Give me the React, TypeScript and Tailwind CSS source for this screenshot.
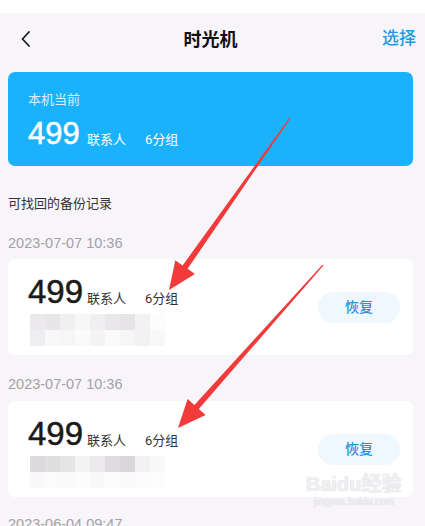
import React from "react";

const font = "font-['Roboto','Noto_Sans_CJK_SC',sans-serif]";
const num = "font-['Liberation_Sans',sans-serif]";

// mosaic cells standing in for the blurred text under each backup
const mosaicA = [
  ["bg-[#ebe9eb]", "bg-[#e8e6e8]", "bg-[#f1f0f1]", "bg-[#f8f7f8]", "bg-[#efeef0]", "bg-[#e9e7e9]", "bg-[#e6e4e6]", "bg-[#f3f2f3]", "bg-[#fcfcfc]"],
  ["bg-[#eeedef]", "bg-[#f8f8f8]", "bg-[#f7f6f7]", "bg-[#fafafa]", "bg-[#f5f4f5]", "bg-[#fafafa]", "bg-[#f6f6f6]", "bg-[#f1f1f1]", "bg-[#f8f8f8]"],
];
const mosaicB = [
  ["bg-[#dcdadc]", "bg-[#e0dfe0]", "bg-[#e6e5e6]", "bg-[#f4f3f4]", "bg-[#eceaec]", "bg-[#dddbdd]", "bg-[#d9d7d9]", "bg-[#f3f2f3]", "bg-[#f9f9f9]"],
  ["bg-[#f9f9f9]", "bg-[#fbfbfb]", "bg-[#fafafa]", "bg-[#fcfcfc]", "bg-[#f9f9f9]", "bg-[#fbfbfb]", "bg-[#fafafa]", "bg-[#fcfcfc]", "bg-[#fdfdfd]"],
];

const Mosaic: React.FC<{ cells: string[][] }> = ({ cells }) => (
  <div className="mt-[5px] ml-[2px] flex flex-col">
    {cells.map((row, r) => (
      <div key={r} className="flex">
        {row.map((c, i) => (
          <div key={i} className={`w-[15px] h-[16px] ${c}`} />
        ))}
      </div>
    ))}
  </div>
);

const BackupCard: React.FC<{ cells: string[][] }> = ({ cells }) => (
  <div className="ml-[8px] mr-[12px] h-[96px] bg-white rounded-[7px] flex items-center pl-[20px] pr-[13px]">
    <div className="flex-1 self-start pt-[16px]">
      <div className="flex items-baseline h-[34px]">
        <span className={`w-[59px] text-[33px] leading-none text-[#1a1a1a] [-webkit-text-stroke:0.5px_#1a1a1a] ${num}`}>499</span>
        <span className="w-[58px] text-[13px] text-[#333]">联系人</span>
        <span className="text-[13px] text-[#333]">6分组</span>
      </div>
      <Mosaic cells={cells} />
    </div>
    <button className="w-[82px] h-[31px] rounded-full bg-[#eef8fe] text-[14px] font-medium text-[#2b8fd6]">
      恢复
    </button>
  </div>
);

const DateLine: React.FC<{ text: string; className: string }> = ({ text, className }) => (
  <div className={`px-[8px] text-[14.5px] leading-[20px] text-[#a3a1a5] ${num} ${className}`}>{text}</div>
);

export default function App() {
  return (
    <div className={`relative w-[425px] h-[526px] overflow-hidden bg-[#f7f5f9] ${font}`}>
      <div className="h-[13px] bg-white" />

      {/* Header */}
      <div className="h-[52px] grid grid-cols-[1fr_auto_1fr] items-center px-[9px]">
        <svg width="14" height="18" viewBox="0 0 14 18" className="ml-[11px]">
          <path d="M9 2 L2.5 9 L9 16" fill="none" stroke="#1a1a1a" strokeWidth="1.8" strokeLinecap="round" strokeLinejoin="round" />
        </svg>
        <span className="text-[18px] font-semibold text-[#111] mr-[4px]">时光机</span>
        <span className="justify-self-end text-[17px] font-medium text-[#1a9be6]">选择</span>
      </div>

      {/* Current device */}
      <div className="mt-[7px] ml-[8px] mr-[12px] h-[94px] rounded-[7px] bg-[#1ab2fd] pl-[20px] pt-[19px]">
        <div className="text-[13px] leading-[18px] text-[#d6f0ff]">本机当前</div>
        <div className="mt-[9px] flex items-baseline text-white">
          <span className={`w-[59px] text-[31px] leading-none [-webkit-text-stroke:0.5px_#fff] ${num}`}>499</span>
          <span className="w-[58px] text-[13px]">联系人</span>
          <span className="text-[13px]">6分组</span>
        </div>
      </div>

      <div className="mt-[28px] px-[8px] text-[13px] leading-[20px] text-[#333]">可找回的备份记录</div>

      <DateLine className="mt-[19px]" text="2023-07-07 10:36" />
      <div className="mt-[6px]">
        <BackupCard cells={mosaicA} />
      </div>

      <DateLine className="mt-[19px]" text="2023-07-07 10:36" />
      <div className="mt-[7px]">
        <BackupCard cells={mosaicB} />
      </div>

      <DateLine className="mt-[17px]" text="2023-06-04 09:47" />

      {/* Watermark */}
      <div className="absolute left-[306px] top-[472px] flex flex-col items-center font-['Liberation_Sans','Noto_Sans_CJK_SC',sans-serif] text-[#f1eff3] [text-shadow:0_0_1px_#c9c7cb]">
        <span className="text-[20px] font-bold leading-[24px]">Baidu经验</span>
        <span className="text-[10px] leading-[12px]">jingyan.baidu.com</span>
      </div>

      {/* Annotation arrows */}
      <svg className="absolute inset-0 pointer-events-none" width="425" height="526">
        <polygon
          fill="#f23a3a"
          points="290.5,118.3 187.6,268.8 194.9,274 169,290 175.3,260.2 182.6,265.4 289.5,117.7"
        />
        <polygon
          fill="#f23a3a"
          points="323.4,265.4 198.8,409 205.6,415 178,428 187.6,399 194.4,405 322.6,264.6"
        />
      </svg>
    </div>
  );
}
